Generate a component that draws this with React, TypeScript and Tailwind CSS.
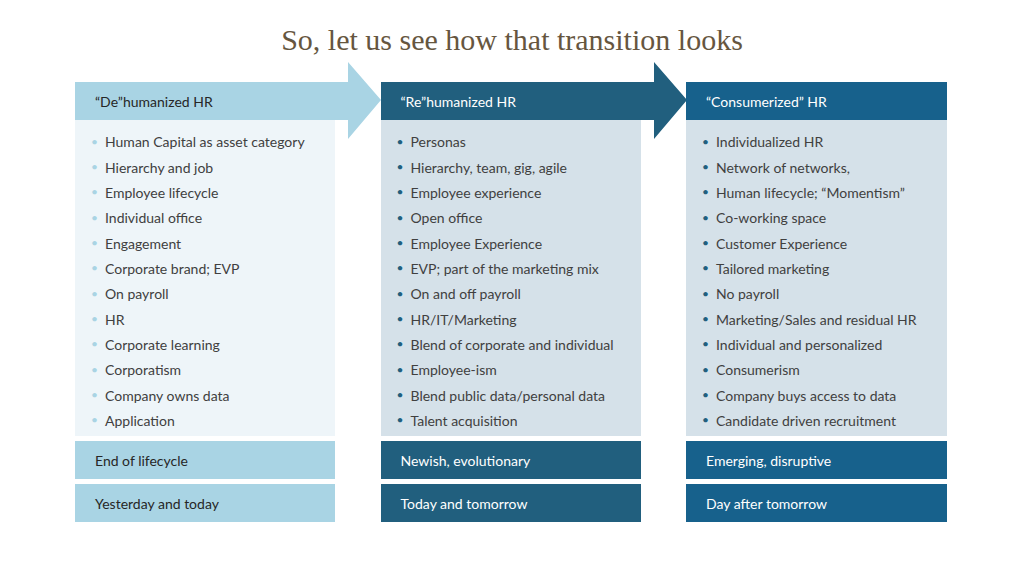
const columns = [
  {
    title: "“De”humanized HR",
    head: "bg-[#a9d4e4] text-[#262626]",
    arrow: "#a9d4e4",
    body: "bg-[#eef5f9]",
    dot: "text-[#a9d4e4]",
    foot: "bg-[#a9d4e4] text-[#262626]",
    items: [
      "Human Capital as asset category",
      "Hierarchy and job",
      "Employee lifecycle",
      "Individual office",
      "Engagement",
      "Corporate brand; EVP",
      "On payroll",
      "HR",
      "Corporate learning",
      "Corporatism",
      "Company owns data",
      "Application",
    ],
    footer: ["End of lifecycle", "Yesterday and today"],
  },
  {
    title: "“Re”humanized HR",
    head: "bg-[#215f7e] text-white",
    arrow: "#215f7e",
    body: "bg-[#d5e1e9]",
    dot: "text-[#215f7e]",
    foot: "bg-[#215f7e] text-white",
    items: [
      "Personas",
      "Hierarchy, team, gig, agile",
      "Employee experience",
      "Open office",
      "Employee Experience",
      "EVP; part of the marketing mix",
      "On and off payroll",
      "HR/IT/Marketing",
      "Blend of corporate and individual",
      "Employee-ism",
      "Blend public data/personal data",
      "Talent acquisition",
    ],
    footer: ["Newish, evolutionary", "Today and tomorrow"],
  },
  {
    title: "“Consumerized” HR",
    head: "bg-[#17618c] text-white",
    arrow: null,
    body: "bg-[#d5e1e9]",
    dot: "text-[#215f7e]",
    foot: "bg-[#17618c] text-white",
    items: [
      "Individualized HR",
      "Network of networks,",
      "Human lifecycle; “Momentism”",
      "Co-working space",
      "Customer Experience",
      "Tailored marketing",
      "No payroll",
      "Marketing/Sales and residual HR",
      "Individual and personalized",
      "Consumerism",
      "Company buys access to data",
      "Candidate driven recruitment",
    ],
    footer: ["Emerging, disruptive", "Day after tomorrow"],
  },
];

export default function App() {
  return (
    <div className="w-[1024px] h-[576px] bg-white overflow-hidden" style={{ fontFamily: "Lato, 'Open Sans', sans-serif" }}>
      <h1 className="pt-[22px] h-[62px] text-center text-[30px] leading-[36px] text-[#66563f]" style={{ fontFamily: "'Liberation Serif', serif" }}>
        So, let us see how that transition looks
      </h1>
      <div className="ml-[75px] mt-[20px] grid grid-cols-[260px_260px_261px] gap-x-[45.5px]">
        {columns.map((c) => (
          <div key={c.title} className="flex flex-col">
            <div className="relative h-[38px]">
              {c.arrow && (
                <svg className="absolute left-0 top-[-20px]" width="306" height="78" viewBox="0 0 306 78">
                  <polygon points="0,20 273,20 273,0 306,38 273,77 273,58 0,58" fill={c.arrow} />
                </svg>
              )}
              <div className={`relative h-full flex items-center pl-[20px] text-[14px] ${c.head} ${c.arrow ? "bg-transparent" : ""}`}>
                {c.title}
              </div>
            </div>
            <ul className={`h-[316px] pt-[9px] ${c.body}`}>
              {c.items.map((it) => (
                <li key={it} className="flex items-center h-[25.35px] text-[14px] text-[#404040]">
                  <span className={`w-[30px] pl-[16px] text-[12px] ${c.dot}`}>•</span>
                  {it}
                </li>
              ))}
            </ul>
            {c.footer.map((f) => (
              <div key={f} className={`mt-[5px] h-[38px] flex items-center pl-[20px] text-[14px] ${c.foot}`}>
                {f}
              </div>
            ))}
          </div>
        ))}
      </div>
    </div>
  );
}
